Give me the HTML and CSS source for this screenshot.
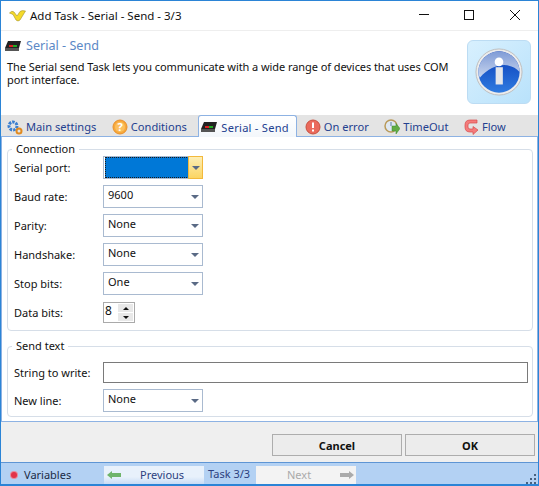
FILE: index.html
```html
<!DOCTYPE html>
<html lang="en">
<head>
    <meta charset="UTF-8" />
    <title>Add Task - Serial - Send - 3/3</title>
    <link rel="stylesheet" href="styles.css">
</head>

<body>
    <main class="window">

        <header class="titlebar">
            <svg class="app-icon" width="17" height="12" viewBox="0 0 17 12">
                <path d="M0.500 3 Q3 0 5 2 L8 6 L11 1.500 Q13 0 16.500 1 L11 10 Q9 12 7 10 L4 4.500 Q2 3.500 0.500 3Z" fill="#f4da2a" stroke="#a39231" stroke-width=".6" />
            </svg>
            <span class="title-text">Add Task - Serial - Send - 3/3</span>
            <div class="win-controls">
                <svg width="12" height="12" viewBox="0 0 12 12"><path d="M1 5.500H11" stroke="#111" /></svg>
                <svg width="12" height="12" viewBox="0 0 12 12"><rect x="1.500" y="1.500" width="9" height="9" fill="none" stroke="#111" /></svg>
                <svg width="12" height="12" viewBox="0 0 12 12"><path d="M1 1L11 11M11 1L1 11" stroke="#111" /></svg>
            </div>
        </header>

        <section class="task-head">
            <div class="task-info">
                <h1 class="task-name">
                    <svg class="serial-icon" width="16" height="10" viewBox="0 0 16 10">
                        <path d="M3 0H16L14 7H0Z" fill="#222" /><path d="M0 7H14V10H0Z" fill="#555" /><path d="M4 4H8V6H4Z" fill="#d22" /><path d="M8 4H12V6H8Z" fill="#2a2" />
                    </svg>
                    Serial - Send
                </h1>
                <p class="task-desc">The Serial send Task lets you communicate with a wide range of devices that uses COM port interface.</p>
            </div>
            <div class="info-box">
                <svg width="48" height="48" viewBox="0 0 50 50">
                    <defs>
                        <linearGradient id="ballTop" x1="0" y1="0" x2="0" y2="1">
                            <stop offset="0" stop-color="#7f9bd6" /><stop offset="1" stop-color="#c9d6ef" />
                        </linearGradient>
                        <linearGradient id="ballLow" x1="0" y1="0" x2="0" y2="1">
                            <stop offset="0" stop-color="#0a3cb8" /><stop offset="1" stop-color="#2f7be0" />
                        </linearGradient>
                    </defs>
                    <circle cx="25" cy="25" r="24" fill="#ececec" stroke="#bdbdbd" />
                    <circle cx="25" cy="25" r="21.500" fill="url(#ballLow)" />
                    <path d="M3.500 25 A21.500 21.500 0 0 1 46.500 25 C38 15 20 14 5 31 Q3.500 28 3.500 25Z" fill="url(#ballTop)" />
                    <circle cx="25" cy="14.500" r="4.500" fill="#fff" />
                    <rect x="21.500" y="20" width="7.500" height="18" fill="#e4e6ea" />
                </svg>
            </div>
        </section>

        <nav class="tabs">
            <div class="tab">
                <svg width="16" height="16" viewBox="0 0 16 16"><circle cx="6" cy="7" r="4" fill="none" stroke="#3b7fd0" stroke-width="3" stroke-dasharray="2.500 1" /><circle cx="12" cy="12" r="2.500" fill="none" stroke="#e08a20" stroke-width="2" /></svg>
                Main settings
            </div>
            <div class="tab">
                <svg width="16" height="16" viewBox="0 0 16 16"><circle cx="8" cy="8" r="7" fill="#f7a93b" stroke="#e9902a" /><circle cx="8" cy="8" r="5" fill="#fbbf5f" /><text x="8" y="12" text-anchor="middle" class="glyph">?</text></svg>
                Conditions
            </div>
            <div class="tab tab-active">
                <svg width="16" height="10" viewBox="0 0 16 10"><path d="M3 0H16L14 7H0Z" fill="#222" /><path d="M0 7H14V10H0Z" fill="#555" /><path d="M4 4H8V6H4Z" fill="#d22" /><path d="M8 4H12V6H8Z" fill="#2a2" /></svg>
                Serial - Send
            </div>
            <div class="tab">
                <svg width="16" height="16" viewBox="0 0 16 16"><circle cx="8" cy="8" r="7" fill="#ea6a5c" stroke="#c9503f" /><path d="M8 3.500V9" stroke="#fff" stroke-width="2" /><path d="M8 10.500V12.500" stroke="#fff" stroke-width="2" /></svg>
                On error
            </div>
            <div class="tab">
                <svg width="16" height="16" viewBox="0 0 16 16"><circle cx="7" cy="7" r="6" fill="#dfe8f2" stroke="#b99a5a" stroke-width="1.500" /><path d="M7 3V7" stroke="#5a7aa0" /><path d="M8 7H12V4.500L16 9.500L12 15V12H8Z" fill="#62ac45" stroke="#3e8a2c" stroke-width=".5" /></svg>
                TimeOut
            </div>
            <div class="tab">
                <svg width="15" height="16" viewBox="0 0 15 16"><path d="M13 1H6Q1 1 1 6V8Q1 13 6 13H9V15.500L14 11L9 7.500V10H6Q4 10 4 8V6Q4 4 6 4H13Z" fill="#f47c7c" stroke="#d84a4a" stroke-width=".7" /></svg>
                Flow
            </div>
        </nav>

        <div class="content">
            <fieldset class="group group-connection">
                <legend>Connection</legend>
                <div class="row">
                    <label>Serial port:</label>
                    <div class="combo combo-focus"><span class="combo-value combo-selected"></span><span class="combo-arrow"></span></div>
                </div>
                <div class="row">
                    <label>Baud rate:</label>
                    <div class="combo"><span class="combo-value">9600</span><span class="combo-arrow"></span></div>
                </div>
                <div class="row">
                    <label>Parity:</label>
                    <div class="combo"><span class="combo-value">None</span><span class="combo-arrow"></span></div>
                </div>
                <div class="row">
                    <label>Handshake:</label>
                    <div class="combo"><span class="combo-value">None</span><span class="combo-arrow"></span></div>
                </div>
                <div class="row">
                    <label>Stop bits:</label>
                    <div class="combo"><span class="combo-value">One</span><span class="combo-arrow"></span></div>
                </div>
                <div class="row">
                    <label>Data bits:</label>
                    <div class="spinner">
                        <span class="spin-value">8</span>
                        <div class="spin-btns">
                            <span class="spin-btn"><i class="tri-up"></i></span>
                            <span class="spin-btn"><i class="tri-down"></i></span>
                        </div>
                    </div>
                </div>
            </fieldset>

            <fieldset class="group group-send">
                <legend>Send text</legend>
                <div class="row row-text">
                    <label>String to write:</label>
                    <div class="text-input"></div>
                </div>
                <div class="row">
                    <label>New line:</label>
                    <div class="combo"><span class="combo-value">None</span><span class="combo-arrow"></span></div>
                </div>
            </fieldset>
        </div>

        <footer class="actions">
            <button class="btn">Cancel</button>
            <button class="btn">OK</button>
        </footer>

        <div class="statusbar">
            <div class="variables"><i class="red-dot"></i>Variables</div>
            <div class="nav-btn">
                <svg width="14" height="8" viewBox="0 0 14 8"><path d="M0 4L5 0V2H14V6H5V8Z" fill="#6fb46a" /></svg>
                <span>Previous</span>
            </div>
            <span class="task-count">Task 3/3</span>
            <div class="nav-btn nav-off">
                <span>Next</span>
                <svg width="14" height="8" viewBox="0 0 14 8"><path d="M14 4L9 0V2H0V6H9V8Z" fill="#aaa" /></svg>
            </div>
            <svg class="grip" width="10" height="10" viewBox="0 0 10 10"><path d="M8 0h2v2H8zM4 4h2v2H4zM8 4h2v2H8zM0 8h2v2H0zM4 8h2v2H4zM8 8h2v2H8z" fill="#47617f" /></svg>
        </div>

    </main>
</body>

</html>
```

FILE: styles.css
```css
* {
    box-sizing: border-box;
}

html,
body {
    margin: 0;
    height: 100%;
    font-family: "Noto Sans", "Open Sans", sans-serif;
    font-size: 11px;
    color: #111;
    background: #fff;
    overflow: hidden;
}

.window {
    width: 539px;
    height: 486px;
    display: flex;
    flex-direction: column;
    border: 1px solid #2b84d6;
    border-bottom-width: 2px;
    background: #fff;
}

.titlebar {
    height: 30px;
    flex: none;
    display: flex;
    align-items: center;
    padding-left: 8px;
    border-bottom: 1px solid #eee;
}

.app-icon {
    margin-right: 4px;
}

.title-text {
    font-size: 11.500px;
    flex: 1;
}

.win-controls {
    display: flex;
    gap: 33px;
    padding-right: 17px;
    margin-bottom: 2px;
}

.win-controls svg:last-child {
    margin-left: 1px;
}

.task-head {
    height: 84px;
    flex: none;
    display: flex;
    padding: 8px 7px 0 6px;
}

.task-info {
    flex: 1;
}

.task-name {
    margin: 0;
    font-size: 12.600px;
    font-weight: 400;
    color: #5b88c6;
    display: flex;
    align-items: center;
    gap: 5px;
    line-height: 14px;
}

.serial-icon {
    flex: none;
    margin-left: -2px;
}

.task-desc {
    margin: 7px 0 0;
    width: 450px;
    line-height: 13px;
    letter-spacing: -0.07px;
}

.info-box {
    width: 64px;
    height: 64px;
    margin-top: 1px;
    border: 1px solid #bcdcf3;
    border-radius: 6px;
    background: linear-gradient(135deg, #d8f0fe, #b9e2fb);
    display: flex;
    align-items: center;
    justify-content: center;
}

.tabs {
    height: 22px;
    flex: none;
    display: flex;
    padding-left: 2px;
    background: #e4e4e4;
    border-bottom: 1px solid #8db2e3;
}

.tab {
    display: flex;
    align-items: center;
    gap: 3px;
    padding: 2px 11.500px 0 4px;
    color: #23408f;
    font-size: 11.100px;
    white-space: nowrap;
}

.tab-active {
    height: 22px;
    margin-right: 4px;
    padding: 1px 7px 0 2px;
    gap: 4px;
    letter-spacing: 0.25px;
    background: linear-gradient(#fff, #f3f7fb);
    border: 1px solid #8db2e3;
    border-bottom: none;
    border-radius: 3px 3px 0 0;
}

.glyph {
    font-size: 11px;
    font-weight: 700;
    fill: #fff;
}

.content {
    height: 285px;
    flex: none;
    padding: 5px 4px 0 5px;
    border: 1px solid #8db2e3;
    border-top: none;
}

.group {
    margin: 0 0 8px;
    padding: 0 0 0 6px;
    border: 1px solid #d6dee8;
    border-radius: 4px;
    min-width: 0;
}

.group-connection {
    height: 189px;
}

.group-send {
    height: 78px;
    padding-top: 8px;
}

.group legend {
    padding: 0 4px;
    margin-left: -2px;
    line-height: 14px;
}

.row {
    display: flex;
    align-items: center;
    height: 22px;
    margin-bottom: 7px;
}

.row-text {
    margin-bottom: 6px;
}

.row label {
    width: 89px;
    flex: none;
}

.combo {
    width: 100px;
    height: 23px;
    display: flex;
    border: 1px solid #a9bad0;
    background: #fff;
}

.combo-value {
    flex: 1;
    padding-left: 4px;
    line-height: 17px;
}

.combo-arrow {
    width: 14px;
    position: relative;
}

.combo-arrow::after {
    content: "";
    position: absolute;
    left: 3px;
    top: 9px;
    border: 3px solid transparent;
    border-top: 4px solid #5a6a85;
    border-bottom: none;
    border-left-width: 4px;
    border-right-width: 4px;
}

.combo-focus {
    padding-left: 1px;
    border-color: #f3b93c;
    border-left-color: #a9bad0;
    border-top-color: #a9bad0;
    border-bottom-color: #a9bad0;
}

.combo-selected {
    background: #0078d7;
    border: 1px dotted #1a1a1a;
}

.combo-focus .combo-arrow {
    width: 13px;
    background: linear-gradient(#fdeeb5, #fbd564);
    outline: 1px solid #f3b93c;
}

.spinner {
    width: 32px;
    height: 21px;
    margin-top: 1px;
    display: flex;
    border: 1px solid #aaa;
    background: #fff;
}

.spin-value {
    flex: 1;
    padding-left: 1px;
    line-height: 16px;
    font-size: 12px;
}

.spin-btns {
    width: 15px;
    display: flex;
    flex-direction: column;
    margin: 1px;
    gap: 1px;
}

.spin-btn {
    flex: 1;
    background: #e8e8e8;
    display: flex;
    align-items: center;
    justify-content: center;
}

.tri-up {
    border: 3px solid transparent;
    border-top: none;
    border-bottom: 3px solid #111;
}

.tri-down {
    border: 3px solid transparent;
    border-bottom: none;
    border-top: 3px solid #111;
}

.text-input {
    flex: 1;
    height: 21px;
    margin-right: 4px;
    border: 1px solid #7a7a7a;
}

.actions {
    height: 40px;
    flex: none;
    display: flex;
    justify-content: flex-end;
    gap: 3px;
    padding: 12px 3px 0 0;
    background: #efefef;
}

.btn {
    width: 130px;
    height: 22px;
    padding: 0;
    font-family: inherit;
    font-size: 11px;
    font-weight: 700;
    color: #111;
    background: #ececec;
    border: 1px solid #adadad;
}

.statusbar {
    height: 22px;
    flex: none;
    display: flex;
    align-items: stretch;
    background: #b3d1f3;
    border-top: 1px solid #5e95d4;
    padding-top: 3px;
    line-height: 16px;
}

.variables {
    width: 103px;
    display: flex;
    align-items: center;
    padding-left: 10px;
    color: #1a2a45;
}

.red-dot {
    width: 6px;
    height: 6px;
    margin-right: 7px;
    border-radius: 50%;
    background: #e2344a;
    box-shadow: 0 0 0 1px #e88a9a;
}

.nav-btn {
    width: 100px;
    display: flex;
    align-items: center;
    padding-left: 3px;
    background: linear-gradient(#e8f1fb 60%, #c8dcf5);
    color: #2c3f80;
}

.nav-btn svg {
    flex: none;
}

.nav-btn span {
    margin-left: 19px;
    white-space: nowrap;
}

.nav-off {
    padding-left: 31px;
    background: #f3f3f3;
    color: #aaa;
}

.nav-off span {
    margin: 0 29px 0 0;
}

.task-count {
    width: 52px;
    padding-left: 4px;
    color: #2c3f80;
    white-space: nowrap;
}

.grip {
    margin: auto 2px 0 auto;
}
```
